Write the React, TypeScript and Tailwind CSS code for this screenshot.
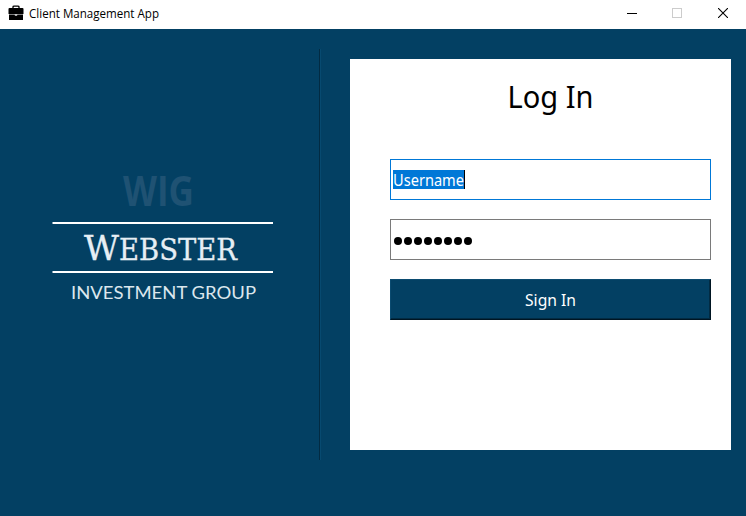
function Briefcase() {
  return (
    <svg width="16" height="16" viewBox="0 0 16 16" fill="none" aria-hidden="true">
      <path d="M5 3.5V1.8Q5 1.2 6.1 1.2h3.8Q11 1.2 11 1.8v1.7" stroke="#000" strokeWidth="1.3" />
      <path d="M1.5 3h13Q15.5 3 15.5 4v5h-15V4Q.5 3 1.5 3Z" fill="#000" />
      <path d="M1 9.400h5.800v1h2.400v-1H15V15H1Z" fill="#000" />
      <path d="M7 9h2v1.400H7Z" fill="#ccc" />
    </svg>
  );
}

function TitleBar() {
  return (
    <header className="flex h-[29px] items-start justify-between bg-white text-black">
      <div className="flex pl-2 pt-[5px]">
        <Briefcase />
        <svg width="132" height="18" className="ml-[5px] overflow-visible" aria-label="Client Management App">
          <text x="0" y="13" textLength="130" lengthAdjust="spacingAndGlyphs" fontSize="12" className="font-['Open_Sans',sans-serif]">Client Management App</text>
        </svg>
      </div>
      <div className="flex pr-[18px] pt-2">
        <svg width="10" height="10" shapeRendering="crispEdges"><path d="M0 5.500h10" stroke="#000" /></svg>
        <svg width="10" height="10" className="ml-[35px]" shapeRendering="crispEdges"><path d="M.5.5h9v9h-9Z" fill="none" stroke="#ccc" /></svg>
        <svg width="10" height="10" className="ml-[36px]"><path d="M0 0l10 10M10 0L0 10" stroke="#000" strokeWidth="1.1" /></svg>
      </div>
    </header>
  );
}

function Logo() {
  return (
    <svg width="221" height="140" viewBox="52 162 221 140" className="overflow-visible" aria-label="WIG Webster Investment Group">
      <text x="123" y="206" textLength="71" lengthAdjust="spacingAndGlyphs" fontSize="42" fontWeight="700" fill="#1f5273" className="font-['Open_Sans',sans-serif]">WIG</text>
      <path d="M52.500 223H273M52.500 272H273" stroke="#fff" strokeWidth="2" />
      <g fill="#e6eef4" stroke="#e6eef4" strokeWidth="0.3" className="font-['DejaVu_Serif',serif]">
        <text x="84" y="260" textLength="35" lengthAdjust="spacingAndGlyphs" fontSize="34">W</text>
        <text x="119" y="260" textLength="118" lengthAdjust="spacingAndGlyphs" fontSize="29">EBSTER</text>
      </g>
      <text x="71" y="299" textLength="185" lengthAdjust="spacingAndGlyphs" fontSize="18" fill="#dce7ee" className="font-['Lato',sans-serif]">INVESTMENT GROUP</text>
    </svg>
  );
}

function LoginForm() {
  return (
    <form className="flex h-[391px] w-[381px] flex-col bg-white px-10 pt-[18px] font-['Noto_Sans',sans-serif]" onSubmit={(e) => e.preventDefault()}>
      <h1 className="flex h-[82px] justify-center">
        <svg width="86" height="50" className="ml-[19px] mr-[-1px] overflow-visible">
          <text x="-0.5" y="30.500" textLength="86" lengthAdjust="spacingAndGlyphs" fontSize="31">Log In</text>
        </svg>
      </h1>
      <div className="flex h-[41px] w-[321px] items-center border border-[#0078d7] pl-[2px]">
        <div className="flex h-[19px] w-[71px] items-center bg-[#0078d7]">
          <svg width="71" height="19" className="overflow-visible">
            <text x="0" y="16" textLength="71" lengthAdjust="spacingAndGlyphs" fontSize="16" fill="#fff">Username</text>
          </svg>
        </div>
        <span className="h-[19px] w-px bg-black" />
      </div>
      <div className="mt-[19px] flex h-[41px] w-[321px] items-center gap-0.5 border border-[#7a7a7a] pl-[3px] pt-[3px]">
        {Array.from({ length: 8 }, (_, i) => (
          <span key={i} className="size-2 rounded-full bg-black" />
        ))}
      </div>
      <button className="mt-[19px] h-[41px] w-[321px] border-b border-l border-r border-t border-b-[#001522] border-l-[#0b4b70] border-r-[#001522] border-t-[#0b4b70] bg-[#034063]">
        <span className="flex h-full items-center justify-center border-b border-r border-[#022b43]">
          <svg width="52" height="22" className="overflow-visible">
            <text x="1" y="18" textLength="51" lengthAdjust="spacingAndGlyphs" fontSize="16" fill="#fff">Sign In</text>
          </svg>
        </span>
      </button>
    </form>
  );
}

export default function App() {
  return (
    <div className="h-[516px] w-[746px] overflow-hidden bg-[#034063]">
      <TitleBar />
      <main className="flex pt-5">
        <aside className="flex h-[411px] w-[319px] pl-[52px] pt-[113px]">
          <Logo />
        </aside>
        <div className="h-[411px] w-[2px] border-l border-r border-l-[#022b43] border-r-[#074a70]" />
        <section className="pl-[29px] pt-[10px]">
          <LoginForm />
        </section>
      </main>
    </div>
  );
}
